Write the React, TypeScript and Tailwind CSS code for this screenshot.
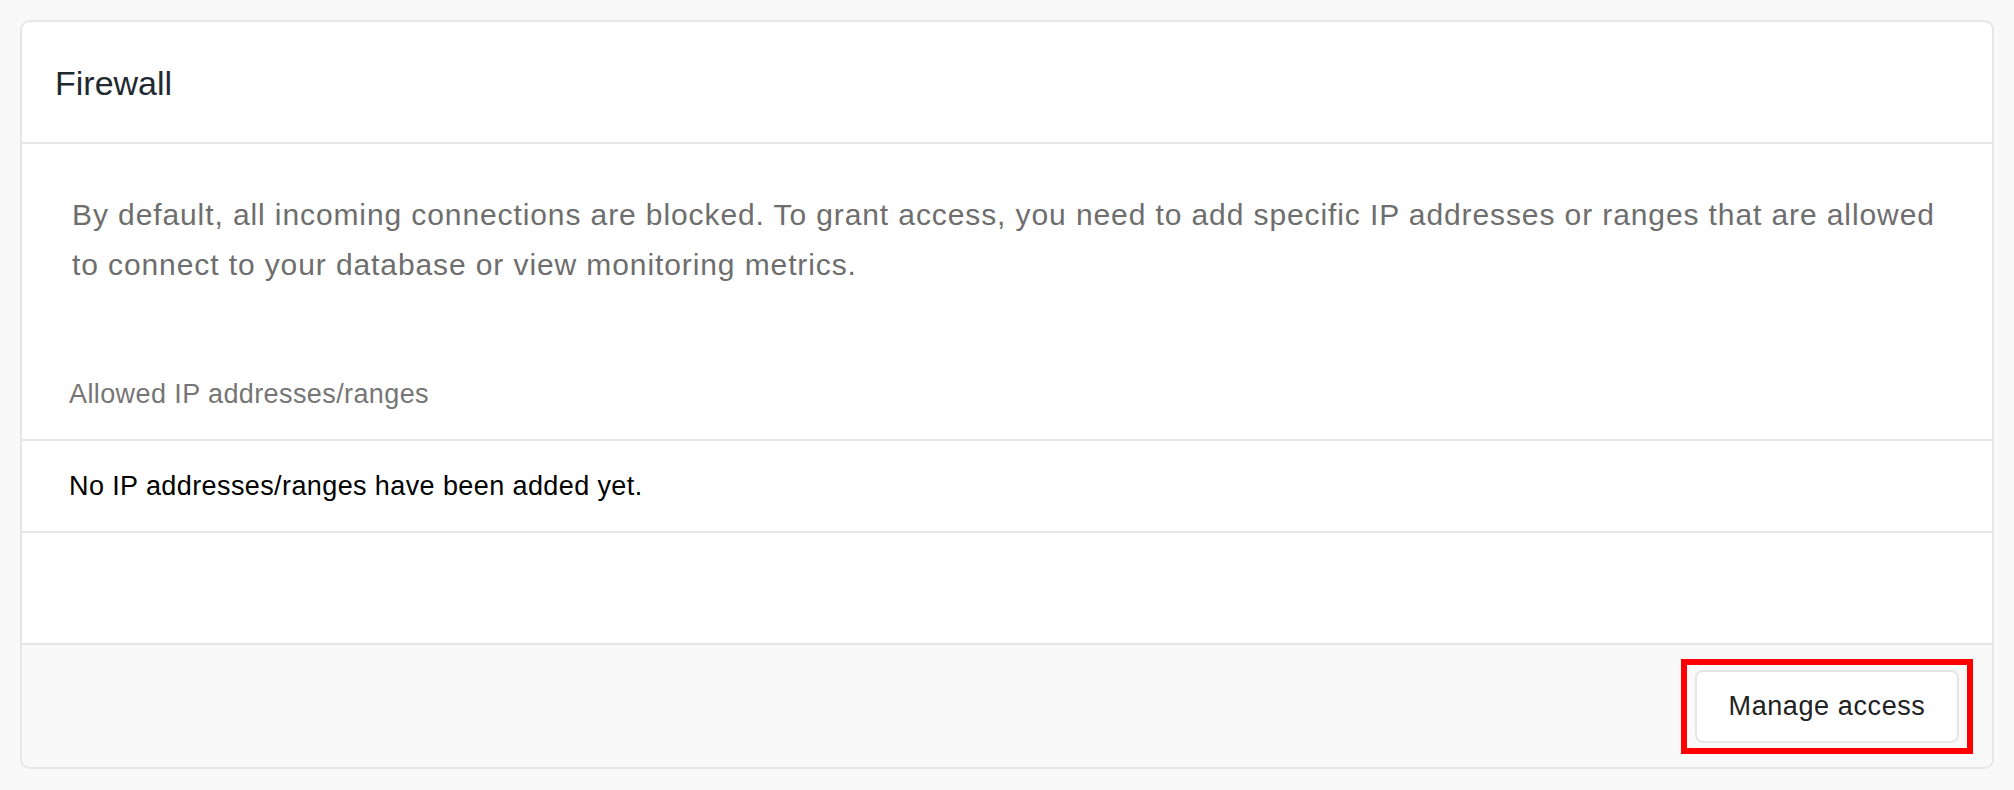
import React from "react";

const sans = "font-['Liberation_Sans',Arial,sans-serif]";

export default function App() {
  return (
    <div className={`h-[790px] bg-[#f9f9f9] p-[20px] ${sans}`}>
      <div className="overflow-hidden rounded-[10px] border-2 border-[#e6e6e6] bg-white">
        {/* Header */}
        <div className="flex h-[122px] items-center border-b-2 border-[#e6e6e6] px-[33px] pt-[2px]">
          <h2 className="text-[34px] leading-none text-[#1f2a30]">Firewall</h2>
        </div>

        {/* Description + allowed list label */}
        <div className="pt-[46px] pb-[25px]">
          <p className="pl-[50px] pr-[44px] text-[30px] leading-[50px] tracking-[0.9px] text-[#6e6e6e]">
            By default, all incoming connections are blocked. To grant access, you need to add specific IP
            addresses or ranges that are allowed to connect to your database or view monitoring metrics.
          </p>
          <div className="mt-[84px] px-[47px] text-[27px] leading-[40px] tracking-[0.4px] text-[#767676]">
            Allowed IP addresses/ranges
          </div>
        </div>

        {/* List */}
        <div className="flex h-[94px] items-center border-y-2 border-[#e6e6e6] px-[47px]">
          <span className="text-[27px] tracking-[0.4px] text-black">No IP addresses/ranges have been added yet.</span>
        </div>
        <div className="h-[110px]" />

        {/* Footer */}
        <div className="flex h-[124px] items-center justify-end border-t-2 border-[#e6e6e6] bg-[#f9f9f9] pr-[33px]">
          <div className="relative">
            <button className="flex h-[73px] w-[264px] items-center justify-center rounded-[8px] border-2 border-[#e6e6e6] bg-white text-[27px] tracking-[0.6px] text-[#222222]">
              Manage access
            </button>
            <span className="pointer-events-none absolute -top-[11px] -right-[14px] -bottom-[11px] -left-[14px] border-[6px] border-[#ff0000]" />
          </div>
        </div>
      </div>
    </div>
  );
}
